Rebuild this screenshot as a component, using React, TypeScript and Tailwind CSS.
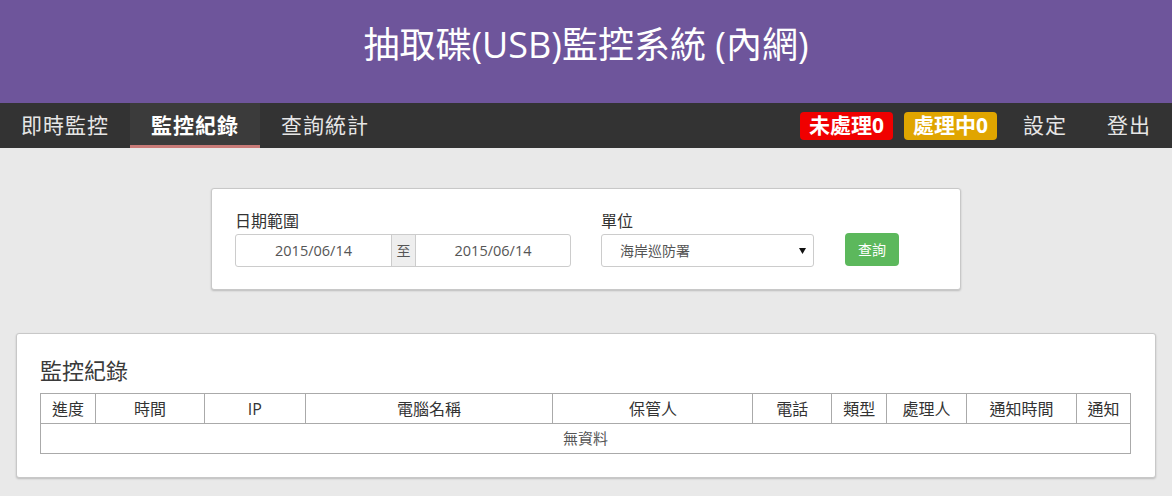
import React from 'react'

const font = { fontFamily: '"Open Sans", "Noto Sans CJK TC", sans-serif' }

const columns = [
  { label: '進度', w: 'w-[55px]' },
  { label: '時間', w: 'w-[109px]' },
  { label: 'IP', w: 'w-[101px]' },
  { label: '電腦名稱', w: 'w-[248px]' },
  { label: '保管人', w: 'w-[200px]' },
  { label: '電話', w: 'w-[79px]' },
  { label: '類型', w: 'w-[55px]' },
  { label: '處理人', w: 'w-[80px]' },
  { label: '通知時間', w: 'w-[110px]' },
  { label: '通知', w: 'w-[54px]' },
]

function App() {
  return (
    <div className="min-h-[496px] bg-[#e9e9e9]" style={font}>
      <header className="h-[103px] bg-[#6e559b] flex items-center justify-center">
        <h1 className="text-[36px] leading-none text-white font-normal -mt-[14px]">抽取碟(USB)監控系統 (內網)</h1>
      </header>

      <nav className="h-[45px] bg-[#333333] flex items-stretch justify-between text-[21px] leading-none">
        <div className="flex">
          <a className="px-[21px] flex items-center text-[#e6e6e6] tracking-[1px]">即時監控</a>
          <a className="px-[21px] flex items-center text-white font-bold bg-[#3b3b3b] border-b-[3px] border-[#c97b78] pt-[3px] tracking-[1px]">監控紀錄</a>
          <a className="px-[21px] flex items-center text-[#e6e6e6] tracking-[1px]">查詢統計</a>
        </div>
        <div className="flex items-center pr-[21px]">
          <span className="bg-[#f00000] text-white font-bold rounded-[4px] px-[9px] h-[28px] flex items-center">未處理0</span>
          <span className="ml-[11px] bg-[#e0a500] text-white font-bold rounded-[4px] px-[9px] h-[28px] flex items-center">處理中0</span>
          <a className="ml-[26px] text-[#e6e6e6] tracking-[1px]">設定</a>
          <a className="ml-[40px] text-[#e6e6e6] tracking-[1px]">登出</a>
        </div>
      </nav>

      <main className="pt-[40px] pb-[19px] px-[16px]">
        <section className="mx-auto w-[750px] bg-white border border-[#c8c8c8] rounded-[3px] shadow-[0_1px_2px_rgba(0,0,0,0.2)] px-[23px] pt-[21px] pb-[22px] flex items-end">
          <div>
            <div className="text-[16px] leading-[22px] text-[#333] mb-[2px]">日期範圍</div>
            <div className="flex h-[33px] w-[336px] border border-[#cccccc] rounded-[3px] text-[14.5px] text-[#555]">
              <div className="w-[155px] flex items-center justify-center">2015/06/14</div>
              <div className="w-[25px] flex items-center justify-center bg-[#eeeeee] border-x border-[#cccccc] text-[14px]">至</div>
              <div className="flex-1 flex items-center justify-center">2015/06/14</div>
            </div>
          </div>
          <div className="ml-[30px]">
            <div className="text-[16px] leading-[22px] text-[#333] mb-[2px]">單位</div>
            <div className="flex h-[33px] w-[213px] border border-[#cccccc] rounded-[3px] items-center pl-[18px] pr-[7px] text-[14px] text-[#555]">
              <span className="flex-1">海岸巡防署</span>
              <svg width="7" height="6" viewBox="0 0 7 6" className="block">
                <path d="M0 0 H7 L3.5 6 Z" fill="#111" />
              </svg>
            </div>
          </div>
          <button className="ml-[31px] h-[33px] w-[54px] bg-[#5cb85c] rounded-[4px] text-white text-[14px] mb-[1px]">查詢</button>
        </section>

        <section className="mt-[43px] bg-white border border-[#c8c8c8] rounded-[3px] shadow-[0_1px_2px_rgba(0,0,0,0.2)] px-[23px] pt-[20px] pb-[23px]">
          <h2 className="text-[22px] leading-[32px] mb-[7px] text-[#3a3a3a] font-normal">監控紀錄</h2>
          <table className="w-[1091px] border-collapse text-[16px] text-[#333]">
            <thead>
              <tr>
                {columns.map((c) => (
                  <th key={c.label} className={`${c.w} h-[30px] border border-[#aaaaaa] font-normal text-center`}>
                    {c.label}
                  </th>
                ))}
              </tr>
            </thead>
            <tbody>
              <tr>
                <td colSpan={10} className="h-[30px] border border-[#aaaaaa] text-center text-[15px] text-[#555]">
                  無資料
                </td>
              </tr>
            </tbody>
          </table>
        </section>
      </main>
    </div>
  )
}

export default App
